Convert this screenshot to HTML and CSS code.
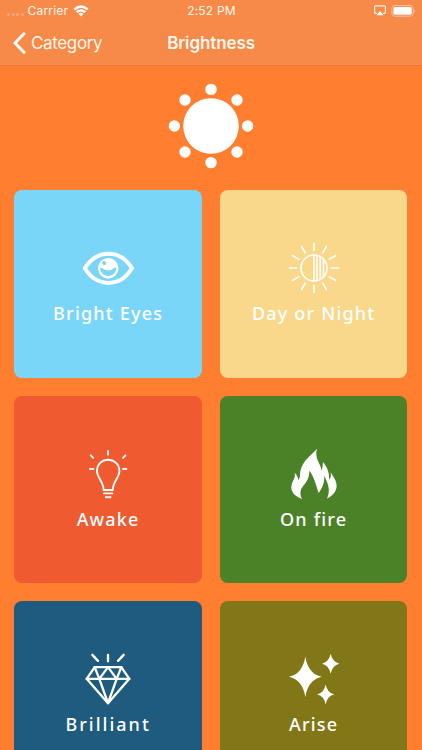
FILE: index.html
```html
<!DOCTYPE html>
<html lang="en">

<head>

  <meta charset="utf-8">
  <meta name="viewport" content="width=device-width, initial-scale=1">

  <title>Brightness</title>

  <link rel="stylesheet" href="styles.css">
</head>

<body>

  <header class="header">
    <div class="status">
      <div class="status-left">
        <span class="signal"><i></i><i></i><i></i><i></i></span>
        <span class="carrier">Carrier</span>
        <svg class="wifi" width="16" height="12" viewBox="0 0 16 12">
          <path d="M0.5 3.7 Q8 -3 15.5 3.7 L13.9 5.4 Q8 0.3 2.1 5.4 Z"></path>
          <path d="M2.9 6.3 Q8 2.1 13.1 6.3 L11.4 8 Q8 5.4 4.6 8 Z"></path>
          <path d="M5.4 8.8 Q8 6.9 10.6 8.8 L8 11.5 Z"></path>
        </svg>
      </div>
      <div class="time">2:52 PM</div>
      <div class="status-right">
        <svg width="12" height="11" viewBox="0 0 12 11">
          <path d="M3 8.4 H1.6 Q0.6 8.4 0.6 7.4 V1.8 Q0.6 0.8 1.6 0.8 H10.4 Q11.4 0.8 11.4 1.8 V7.4 Q11.4 8.4 10.4 8.4 H9" fill="none" stroke="#fff0e2" stroke-width="1.2"></path>
          <path d="M6 6 L9.6 10.2 H2.4 Z" fill="#fff"></path>
        </svg>
        <svg width="25" height="12" viewBox="0 0 25 12">
          <rect x="0.9" y="0.6" width="21.4" height="10.6" rx="3" fill="none" stroke="#fbc4a0" stroke-width="1"></rect>
          <rect x="2.4" y="2.1" width="18.4" height="7.6" rx="1.6" fill="#fff"></rect>
          <path d="M23.6 4.2 Q25.2 5.9 23.6 7.6 Z" fill="#fbc4a0"></path>
        </svg>
      </div>
    </div>
    <nav class="nav">
      <a class="back">
        <svg width="13" height="22" viewBox="0 0 13 22">
          <path d="M11 1.8 L2 11 L11 20.2" fill="none" stroke="#fff" stroke-width="3" stroke-linecap="round"></path>
        </svg>
        <span>Category</span>
      </a>
      <h1 class="title">Brightness</h1>
      <span></span>
    </nav>
  </header>

  <main class="content">
    <svg class="sun" width="86" height="86" viewBox="-43 -43 86 86" fill="white">
      <circle r="27.8"></circle>
      <circle cx="0" cy="-36.6" r="5.7"></circle>
      <circle cx="26" cy="-26" r="5.7"></circle>
      <circle cx="36.6" cy="0" r="5.7"></circle>
      <circle cx="26" cy="26" r="5.7"></circle>
      <circle cx="0" cy="36.6" r="5.7"></circle>
      <circle cx="-26" cy="26" r="5.7"></circle>
      <circle cx="-36.6" cy="0" r="5.7"></circle>
      <circle cx="-26" cy="-26" r="5.7"></circle>
    </svg>

    <div class="grid">
      <div class="card card-eyes">
        <svg class="icon" viewBox="0 0 60 60">
          <path d="M6.8 30.3 C19 10.8 42 10.8 54 30.3 C42 49.8 19 49.8 6.8 30.3 Z" fill="none" stroke="white" stroke-width="4" stroke-linejoin="round"></path>
          <circle cx="30.2" cy="30.3" r="10.3" fill="white"></circle>
          <path d="M22.2 29.6 C25 30 26 32.4 30.2 32.4 C34.4 32.4 35.4 30 38.2 29.6 C38.4 40.8 22 40.8 22.2 29.6 Z" fill="#7ad6f9"></path>
          <circle cx="26.2" cy="25" r="2.1" fill="#7ad6f9"></circle>
        </svg>
        <span class="label">Bright Eyes</span>
      </div>

      <div class="card card-day">
        <svg class="icon" viewBox="-30 -30 60 60" fill="none" stroke="white" stroke-width="1.6" stroke-linecap="round">
          <circle r="13"></circle>
          <path d="M0 -13 V13 M3 -12.5 V12.5 M6.2 -11.3 V11.3 M9.4 -9 V9"></path>
          <path d="M0 -17.5 V-24.6 M0 17.5 V24.6 M-17.5 0 H-24.6 M17.5 0 H24.6"></path>
          <path d="M8.8 -15.2 L12.4 -21.5 M15.2 -8.8 L21.5 -12.4 M15.2 8.8 L21.5 12.4 M8.8 15.2 L12.4 21.5"></path>
          <path d="M-8.8 -15.2 L-12.4 -21.5 M-15.2 -8.8 L-21.5 -12.4 M-15.2 8.8 L-21.5 12.4 M-8.8 15.2 L-12.4 21.5"></path>
        </svg>
        <span class="label">Day or Night</span>
      </div>

      <div class="card card-awake">
        <svg class="icon" viewBox="0 0 60 60" fill="none" stroke="white" stroke-width="1.9" stroke-linecap="round">
          <path d="M25.6 46 C25.6 37.5 19 34 19 26.8 C19 20.4 23.8 15.8 30 15.8 C36.2 15.8 41.4 20.4 41.4 26.8 C41.4 34 34.8 37.5 34.8 46 Z" stroke-linejoin="round"></path>
          <path d="M26 49.4 H34.4 M27.8 53.2 H32.6"></path>
          <path d="M30 7 V10.5 M12.8 11.3 L15.2 13.9 M47.4 11.3 L45 13.9 M12 25 H15.4 M45 25 H48.4"></path>
        </svg>
        <span class="label">Awake</span>
      </div>

      <div class="card card-fire">
        <svg class="icon" viewBox="0 0 180 180" fill="white">
          <path d="M99 14 C82 36 52 48 48 92 C48 98 47 103 43 108 C42 100 39 93 32 87 C36 104 22 112 22 130 C22 148 36 158 54 165 C46 148 49 136 58 125 C68 113 76 102 76 80 C90 98 96 122 104 147 C113 134 121 122 121 96 C131 116 141 138 129 164 C150 153 163 136 156 114 C153 104 146 96 140 85 C142 96 140 102 135 107 C137 84 128 68 117 54 C116 62 116 72 113 80 C110 58 90 42 99 14 Z"></path>
        </svg>
        <span class="label">On fire</span>
      </div>

      <div class="card card-brilliant">
        <svg class="icon" viewBox="70 13.5 180 180" fill="none" stroke="white" stroke-width="7" stroke-linecap="round" stroke-linejoin="round">
          <path d="M120 68 H200 L224 103 L160 176 L96 103 Z"></path>
          <path d="M96 103 H224 M120 68 L134 103 L160 68 L186 103 L200 68 M134 103 L160 176 L186 103"></path>
          <path d="M113 31 L130 49 M160 31 V50 M207 31 L190 49"></path>
        </svg>
        <span class="label label-wide">Brilliant</span>
      </div>

      <div class="card card-arise">
        <svg class="icon" viewBox="56 13.5 180 180" fill="white">
          <path d="M120 36 Q128 88 169 97 Q128 106 120 158 Q112 106 71 97 Q112 88 120 36 Z"></path>
          <path d="M196 28 Q201 53 222 58 Q201 63 196 88 Q191 63 170 58 Q191 53 196 28 Z"></path>
          <path d="M181 120 Q186 146 207 150 Q186 154 181 180 Q176 154 155 150 Q176 146 181 120 Z"></path>
        </svg>
        <span class="label">Arise</span>
      </div>
    </div>
  </main>

</body>

</html>
```
FILE: styles.css
```css
* {
  box-sizing: border-box;
}

body {
  margin: 0;
  background: #ff7e30;
  color: white;
  font-family: Inter, "Liberation Sans", sans-serif;
}

.header {
  height: 66px;
  background: #f78a48;
  border-bottom: 1px solid #e87838;
}

.status {
  display: grid;
  grid-template-columns: 1fr auto 1fr;
  align-items: center;
  height: 21px;
  padding: 0 6px 0 7px;
  font-size: 12px;
  letter-spacing: 0.2px;
  color: #fff6ec;
}

.status-left,
.status-right {
  display: flex;
  align-items: center;
}

.status-right {
  justify-content: flex-end;
  gap: 5px;
}

.signal {
  display: flex;
  gap: 1.5px;
  margin: 7px 4px 0 0;
}

.signal i {
  width: 3px;
  height: 3px;
  border-radius: 50%;
  background: #f9a777;
}

.wifi {
  margin-left: 5px;
  fill: white;
}

.nav {
  display: grid;
  grid-template-columns: 1fr auto 1fr;
  align-items: center;
  height: 44px;
  padding: 0 13px;
}

.back {
  display: flex;
  align-items: center;
  gap: 5px;
  font-size: 17px;
  letter-spacing: -0.35px;
  color: #fff6ec;
}

.title {
  margin: 0;
  font-size: 17px;
  font-weight: 600;
  letter-spacing: -0.1px;
  color: #fff6ec;
}

.content {
  height: 684px;
  overflow: hidden;
  padding-top: 17px;
}

.sun {
  display: block;
  margin: 0 auto;
}

.grid {
  display: grid;
  grid-template-columns: 187.5px 187.5px;
  grid-auto-rows: 187.5px;
  gap: 18px;
  padding: 21.4px 14.4px 0;
}

.card {
  display: flex;
  flex-direction: column;
  align-items: center;
  padding-top: 48px;
  border-radius: 8px;
}

.icon {
  flex: none;
  width: 60px;
  height: 60px;
}

.label {
  margin-top: 2px;
  font-family: Chalkduster, "Chalkboard SE", "Noto Sans", sans-serif;
  font-size: 18px;
  font-weight: 500;
  line-height: 26px;
  letter-spacing: 1.2px;
  white-space: nowrap;
}

.label-wide {
  letter-spacing: 2px;
}

.card-eyes {
  background: #7ad6f9;
}

.card-day {
  background: #f9d88c;
}

.card-awake {
  background: #ef5a30;
}

.card-fire {
  background: #4b8228;
}

.card-brilliant {
  background: #1e5b7e;
}

.card-arise {
  background: #827717;
}
```
